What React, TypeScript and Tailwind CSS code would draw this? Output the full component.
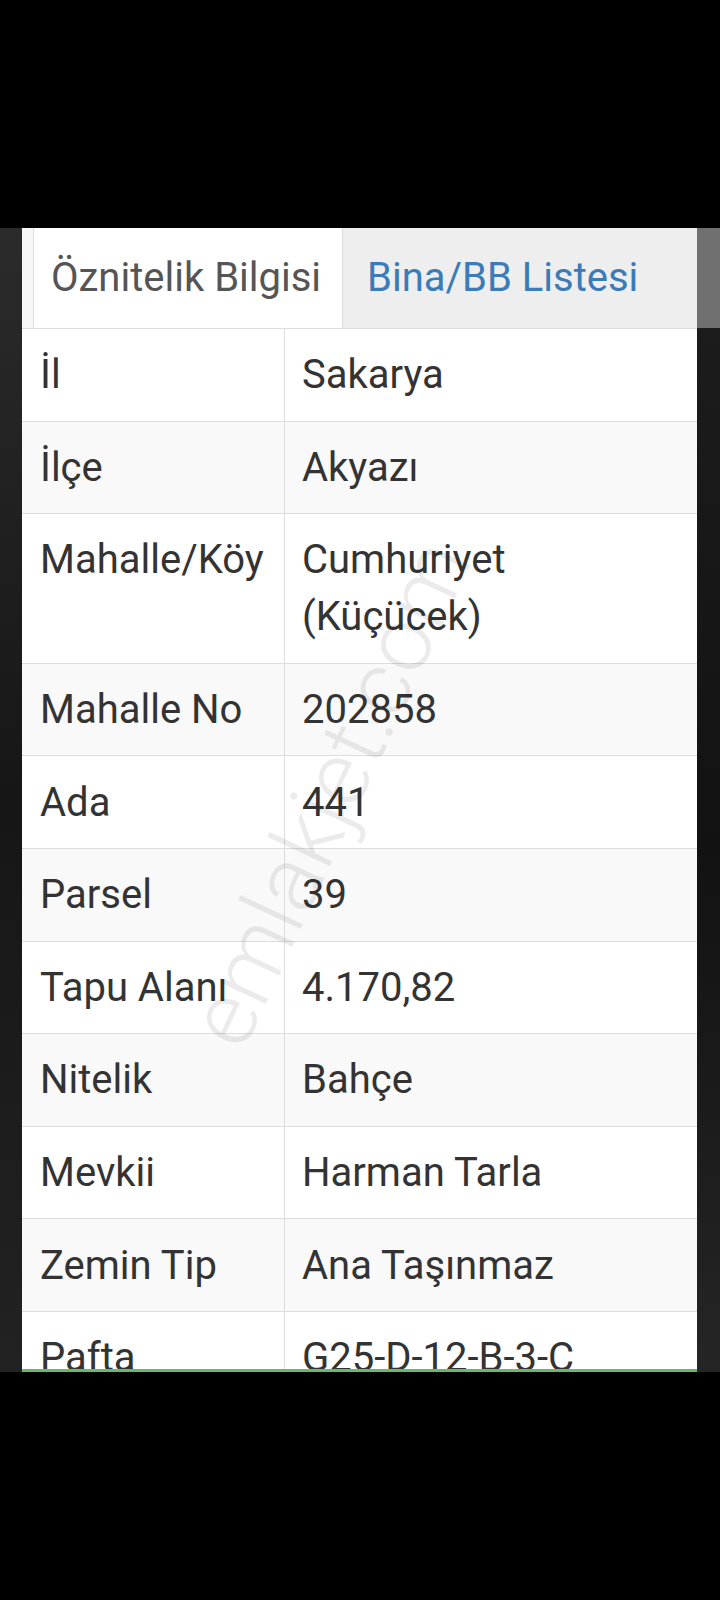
import React from 'react';

interface Row {
  label: string;
  value: string[];
}

const rows: Row[] = [
  { label: 'İl', value: ['Sakarya'] },
  { label: 'İlçe', value: ['Akyazı'] },
  { label: 'Mahalle/Köy', value: ['Cumhuriyet', '(Küçücek)'] },
  { label: 'Mahalle No', value: ['202858'] },
  { label: 'Ada', value: ['441'] },
  { label: 'Parsel', value: ['39'] },
  { label: 'Tapu Alanı', value: ['4.170,82'] },
  { label: 'Nitelik', value: ['Bahçe'] },
  { label: 'Mevkii', value: ['Harman Tarla'] },
  { label: 'Zemin Tip', value: ['Ana Taşınmaz'] },
  { label: 'Pafta', value: ['G25-D-12-B-3-C'] },
];

function Tabs() {
  return (
    <div className="flex h-[101px] shrink-0 border-b border-[#dddddd] bg-[#f7f7f7] pl-[11px]">
      <div className="flex w-[310px] items-center border-x border-[#dddddd] bg-white pl-[17px] text-[40px] text-[#555555]">
        Öznitelik Bilgisi
      </div>
      <div className="flex flex-1 items-center bg-[#eeeeee] pl-[24px] text-[40px] text-[#3a7bb8]">
        Bina/BB Listesi
      </div>
    </div>
  );
}

function AttrTable() {
  return (
    <div className="flex flex-col">
      {rows.map((r, i) => (
        <div
          key={r.label}
          className={`flex border-b border-[#dddddd] text-[40px] leading-[57px] text-[#333333] ${i % 2 === 1 ? 'bg-[#f9f9f9]' : 'bg-white'}`}
        >
          <div className="w-[263px] shrink-0 border-r border-[#dddddd] py-[17.3px] pl-[18px]">{r.label}</div>
          <div className="flex-1 py-[17.3px] pl-[17px]">
            {r.value.map((v) => (
              <div key={v}>{v}</div>
            ))}
          </div>
        </div>
      ))}
    </div>
  );
}

export default function App() {
  return (
    <div className="flex h-[1600px] w-[720px] flex-col bg-black" style={{ fontFamily: 'Roboto, "Noto Sans", sans-serif' }}>
      <div className="h-[228px] shrink-0" />
      <div className="flex h-[1144px] shrink-0">
        <div className="w-[22px] shrink-0 bg-gradient-to-b from-[#2b2b2b] via-[#161616] to-[#222222]" />
        <div className="relative flex flex-1 flex-col overflow-hidden border-b-[3px] border-[#66bb66] bg-white">
          <Tabs />
          <AttrTable />
          {/* watermark */}
          <div className="pointer-events-none absolute left-[308px] top-[565px] -translate-x-1/2 -translate-y-1/2 -rotate-[65deg] whitespace-nowrap text-[92px] font-light text-black/[0.08]">
            emlakjet.com
          </div>
        </div>
        <div className="flex w-[23px] shrink-0 flex-col">
          <div className="h-[100px] bg-[#707070]" />
          <div className="flex-1 bg-gradient-to-b from-[#1c1c1c] via-[#121212] to-[#252525]" />
        </div>
      </div>
      <div className="flex-1" />
    </div>
  );
}
